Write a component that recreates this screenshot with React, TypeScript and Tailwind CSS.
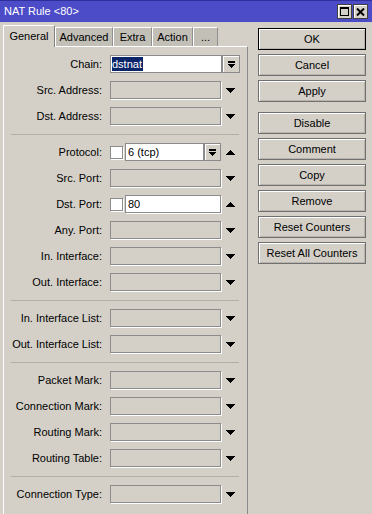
import type { ReactNode } from "react";

const font = "font-['Liberation_Sans',Arial,sans-serif]";

function Down() {
  return (
    <svg width="9" height="5" viewBox="0 0 9 5" className="block" shapeRendering="crispEdges">
      <path d="M0 0h9v1H0zM1 1h7v1H1zM2 2h5v1H2zM3 3h3v1H3zM4 4h1v1H4z" fill="#000" />
    </svg>
  );
}

function Up() {
  return (
    <svg width="9" height="5" viewBox="0 0 9 5" className="block" shapeRendering="crispEdges">
      <path d="M4 0h1v1H4zM3 1h3v1H3zM2 2h5v1H2zM1 3h7v1H1zM0 4h9v1H0z" fill="#000" />
    </svg>
  );
}

function ComboBtn({ w = 17 }: { w?: number }) {
  return (
    <div
      className={`flex h-[18px] items-center justify-center border border-[#8a8a8a] bg-[#d4d0c8] shadow-[inset_1px_1px_0_#fff] ${w === 18 ? "w-[18px]" : "w-[17px]"}`}
    >
      <svg width="7" height="7" viewBox="0 0 7 7" className="block" shapeRendering="crispEdges">
        <path d="M0 0h7v2H0zM0 3h7v1H0zM1 4h5v1H1zM2 5h3v1H2zM3 6h1v1H3z" fill="#000" />
      </svg>
    </div>
  );
}

function Empty() {
  return <div className="h-[18px] w-[111px] border border-[#8c8c8c] shadow-[1px_1px_0_#fff]" />;
}

function Check() {
  return <div className="mr-[2px] h-[13px] w-[13px] border border-[#8c8c8c] bg-white shadow-[1px_1px_0_#fff]" />;
}

function Row({ label, children }: { label: string; children?: ReactNode }) {
  return (
    <div className="flex h-[26px] items-center">
      <div className="w-[98px] whitespace-nowrap text-right">{label}</div>
      <div className="ml-[8px] flex items-center">{children}</div>
    </div>
  );
}

function Field({ label }: { label: string }) {
  return (
    <Row label={label}>
      <Empty />
      <div className="ml-[5px]">
        <Down />
      </div>
    </Row>
  );
}

function Sep() {
  return <div className="ml-[7px] mr-[8px] mt-[5px] mb-[4px] border-t border-[#b3afa7]" />;
}

function Btn({ children, def }: { children: ReactNode; def?: boolean }) {
  return (
    <div
      className={`flex h-[22px] w-[108px] items-center justify-center border bg-[#d4d0c8] shadow-[inset_1px_1px_0_#fff,inset_-1px_-1px_0_#b8b4ac] ${def ? "border-black" : "border-[#707070]"}`}
    >
      {children}
    </div>
  );
}

const tabs = [
  { name: "General", w: "w-[52px]" },
  { name: "Advanced", w: "w-[58px]" },
  { name: "Extra", w: "w-[39px]" },
  { name: "Action", w: "w-[41px]" },
  { name: "...", w: "w-[25px]" },
];

export default function App() {
  return (
    <div className={`${font} h-[514px] w-[372px] overflow-hidden bg-[#d4d0c8] text-[11px] text-black`}>
      {/* title bar */}
      <div className="flex h-[22px] items-center border-t border-[#2f2f9c] bg-[#4c4cc8] pl-[4px] pr-[4px]">
        <span className="flex-1 text-[11px] text-white">NAT Rule &lt;80&gt;</span>
        <div className="flex gap-[1px]">
          <div className="flex h-[15px] w-[15px] items-center justify-center border border-[#404040] bg-[#d4d0c8] shadow-[inset_1px_1px_0_#fff]">
            <div className="h-[9px] w-[9px] border border-black border-t-2" />
          </div>
          <div className="flex h-[15px] w-[15px] items-center justify-center border border-[#404040] bg-[#d4d0c8] shadow-[inset_1px_1px_0_#fff]">
            <svg width="9" height="8" viewBox="0 0 9 8" className="block">
              <path d="M1 0.5L8 7.5M8 0.5L1 7.5" stroke="#000" strokeWidth="2" />
            </svg>
          </div>
        </div>
      </div>

      <div className="flex pl-[3px]">
        {/* left: tabs + panel */}
        <div className="flex w-[245px] flex-col">
          <div className="flex h-[24px] items-end">
            {tabs.map((t, i) =>
              i === 0 ? (
                <div
                  key={t.name}
                  className={`${t.w} relative z-10 -mb-px flex h-[22px] items-center justify-center border-l border-t border-r border-l-white border-t-white border-r-[#808080] bg-[#d4d0c8]`}
                >
                  {t.name}
                </div>
              ) : (
                <div
                  key={t.name}
                  className={`${t.w} flex h-[19px] items-center justify-center border-l border-t border-r border-l-white border-t-white border-r-[#909090] bg-[#c2bfb7]`}
                >
                  {t.name}
                </div>
              ),
            )}
          </div>
          <div className="h-[500px] border-l border-r border-t border-l-white border-t-white border-r-[#8a8a8a] pt-[4px]">
            <Row label="Chain:">
              <div className="flex h-[18px] w-[112px] items-center border border-[#8c8c8c] bg-white pl-[1px]">
                <span className="bg-[#0a246a] pr-[1px] leading-[14px] text-white">dstnat</span>
              </div>
              <ComboBtn w={18} />
            </Row>
            <Field label="Src. Address:" />
            <Field label="Dst. Address:" />
            <Sep />
            <Row label="Protocol:">
              <Check />
              <div className="flex h-[18px] w-[79px] items-center border border-[#8c8c8c] bg-white pl-[2px]">6 (tcp)</div>
              <ComboBtn />
              <div className="ml-[5px]">
                <Up />
              </div>
            </Row>
            <Field label="Src. Port:" />
            <Row label="Dst. Port:">
              <Check />
              <div className="flex h-[18px] w-[96px] items-center border border-[#8c8c8c] bg-white pl-[2px] shadow-[1px_1px_0_#fff]">80</div>
              <div className="ml-[5px]">
                <Up />
              </div>
            </Row>
            <Field label="Any. Port:" />
            <Field label="In. Interface:" />
            <Field label="Out. Interface:" />
            <Sep />
            <Field label="In. Interface List:" />
            <Field label="Out. Interface List:" />
            <Sep />
            <Field label="Packet Mark:" />
            <Field label="Connection Mark:" />
            <Field label="Routing Mark:" />
            <Field label="Routing Table:" />
            <Sep />
            <Field label="Connection Type:" />
          </div>
        </div>

        {/* right: buttons */}
        <div className="ml-[10px] mt-[6px] flex w-[108px] flex-col gap-[4px]">
          <Btn def>OK</Btn>
          <Btn>Cancel</Btn>
          <Btn>Apply</Btn>
          <div className="h-[2px]" />
          <Btn>Disable</Btn>
          <Btn>Comment</Btn>
          <Btn>Copy</Btn>
          <Btn>Remove</Btn>
          <Btn>Reset Counters</Btn>
          <Btn>Reset All Counters</Btn>
        </div>
      </div>
    </div>
  );
}
